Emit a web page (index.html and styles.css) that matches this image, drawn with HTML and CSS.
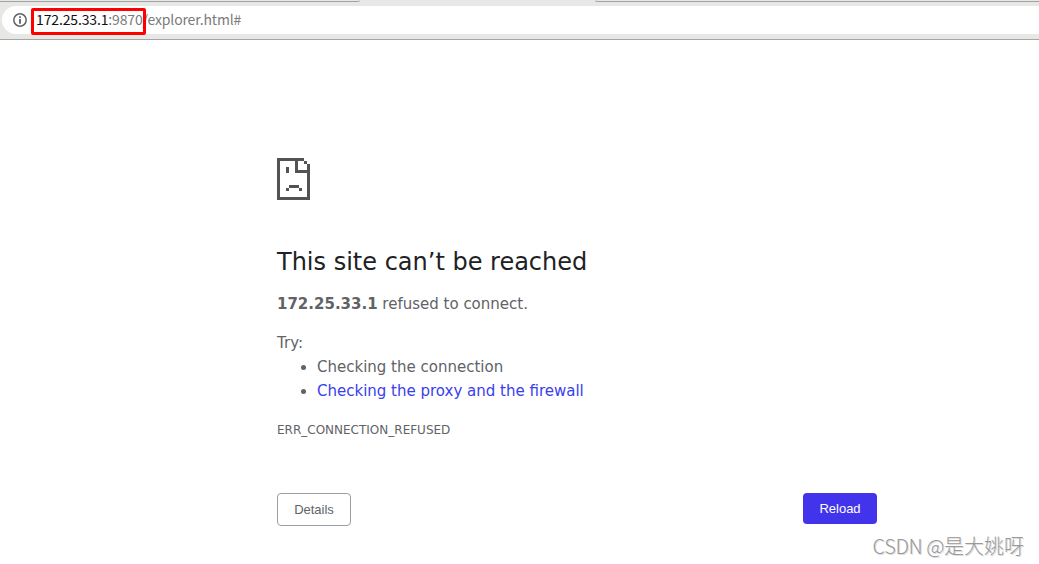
FILE: index.html
```
<!DOCTYPE html>
<html lang="en">
<head>
    <meta charset="UTF-8">
    <meta name="viewport" content="width=device-width, initial-scale=1.0">
    <title>172.25.33.1</title>
    <link rel="stylesheet" href="styles.css">
</head>
<body>
    <header class="toolbar">
        <div class="tabs">
            <div class="tab tab-left"></div>
            <div class="tab tab-right"></div>
        </div>
        <div class="address">
            <svg class="info" width="14" height="14" viewBox="0 0 14 14">
                <circle cx="7" cy="7" r="6.2" fill="none" stroke="#5f6368" stroke-width="1.5"/>
                <path d="M6.1 3.2h1.8v1.8H6.1zM6.1 6h1.8v4.8H6.1z" fill="#5f6368"/>
            </svg>
            <div class="url"><span class="host">172.25.33.1</span>:9870/explorer.html#<span class="highlight"></span></div>
        </div>
    </header>

    <main class="error">
        <svg class="sad-page" width="33" height="42" viewBox="0 0 33 42" shape-rendering="crispEdges">
            <path d="M0 0h27v3H0zM0 3h3v36H0zM0 39h33v3H0zM30 6h3v33h-3zM27 3h3v3h-3zM18 3h3v9h-3zM18 12h12v3H18zM9 9h3v6H9zM12 27h10v3H12zM9 30h3v3H9zM22 30h3v3h-3z" fill="#535353"/>
        </svg>
        <h1>This site can’t be reached</h1>
        <p><strong>172.25.33.1</strong> refused to connect.</p>
        <div class="suggestions">
            <p>Try:</p>
            <ul>
                <li>Checking the connection</li>
                <li><a href="#">Checking the proxy and the firewall</a></li>
            </ul>
        </div>
        <div class="error-code">ERR_CONNECTION_REFUSED</div>
        <div class="buttons">
            <button class="details">Details</button>
            <button class="reload">Reload</button>
        </div>
    </main>

    <div class="watermark"><span class="latin">CSDN @</span>是大姚呀</div>
</body>
</html>
```
FILE: styles.css
```
* {
    margin: 0;
    padding: 0;
    box-sizing: border-box;
}

body {
    height: 100vh;
    background: #fff;
    color: #5f6368;
    font-family: "DejaVu Sans", sans-serif;
    font-size: 15px;
    line-height: 24px;
    position: relative;
    overflow: hidden;
}

.toolbar {
    height: 40px;
    background: #e7e7e5;
    border-bottom: 1px solid #a6a6a4;
}

.tabs {
    height: 6px;
    display: flex;
    justify-content: space-between;
}

.tab {
    height: 2px;
    border-bottom: 1px solid #a3a3a1;
}

.tab-left {
    width: 360px;
    border-bottom-right-radius: 3px;
}

.tab-right {
    width: 444px;
    border-bottom-left-radius: 3px;
}

.address {
    height: 28px;
    margin-left: 2px;
    padding-left: 11px;
    background: #fff;
    border-radius: 14px 0 0 14px;
    display: flex;
    align-items: center;
}

.info {
    margin-right: 9px;
}

.url {
    position: relative;
    font-family: "Noto Sans CJK SC", sans-serif;
    font-size: 14px;
    line-height: 26px;
    height: 28px;
    letter-spacing: -0.14px;
    color: #7b7b7b;
}

.host {
    color: #111;
}

.highlight {
    position: absolute;
    left: -5px;
    top: 2px;
    width: 115px;
    height: 27px;
    border: 3px solid #fe0000;
    border-radius: 2px;
}

.error {
    width: 600px;
    margin: 118px 0 0 277px;
}

.sad-page {
    display: block;
    margin-bottom: 47px;
}

h1 {
    color: #202124;
    font-size: 24px;
    font-weight: 500;
    line-height: 30px;
    margin-bottom: 15px;
}

.suggestions {
    margin-top: 15px;
}

ul {
    padding-left: 40px;
}

a {
    color: #3740ee;
    text-decoration: none;
}

.error-code {
    margin-top: 15px;
    font-size: 12px;
}

.buttons {
    display: flex;
    justify-content: space-between;
    align-items: flex-start;
    margin-top: 51px;
}

button {
    width: 74px;
    border-radius: 4px;
    font-family: "Liberation Sans", sans-serif;
    font-size: 13px;
}

.details {
    height: 33px;
    background: #fff;
    border: 1px solid #9aa0a6;
    color: #5f6368;
}

.reload {
    height: 31px;
    background: #4234ea;
    border: none;
    color: #fff;
}

.watermark {
    position: absolute;
    right: 15px;
    bottom: 4px;
    font-family: "Noto Sans CJK SC", sans-serif;
    font-size: 20px;
    font-weight: 300;
    line-height: 28px;
    color: #999;
    text-shadow: 1px 1px 0 #ddd;
}

.latin {
    letter-spacing: -0.4px;
}
```
